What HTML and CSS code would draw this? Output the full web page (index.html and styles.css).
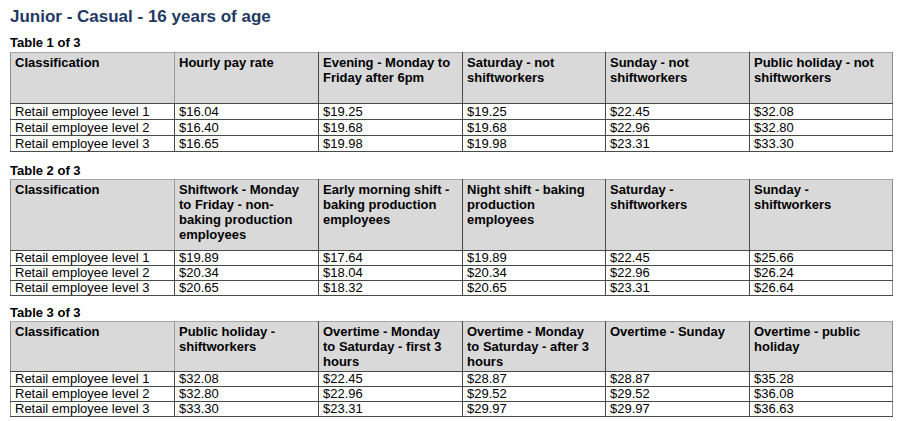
FILE: index.html
```html
<!DOCTYPE html>
<html lang="en">
<head>
<meta charset="utf-8">
<title>Junior - Casual - 16 years of age</title>
<link rel="stylesheet" href="styles.css">
</head>
<body>
<div class="page">
  <h1 class="title">Junior - Casual - 16 years of age</h1>

  <div class="label label-1">Table 1 of 3</div>
  <table class="rates rates-1">
    <colgroup>
      <col class="c1"><col class="c2"><col class="c3"><col class="c4"><col class="c5"><col class="c6">
    </colgroup>
    <thead>
      <tr>
        <th><div class="hd">Classification</div></th>
        <th><div class="hd">Hourly pay rate</div></th>
        <th><div class="hd">Evening - Monday to Friday after 6pm</div></th>
        <th><div class="hd">Saturday - not shiftworkers</div></th>
        <th><div class="hd">Sunday - not shiftworkers</div></th>
        <th><div class="hd">Public holiday - not shiftworkers</div></th>
      </tr>
    </thead>
    <tbody>
      <tr><td>Retail employee level 1</td><td>$16.04</td><td>$19.25</td><td>$19.25</td><td>$22.45</td><td>$32.08</td></tr>
      <tr><td>Retail employee level 2</td><td>$16.40</td><td>$19.68</td><td>$19.68</td><td>$22.96</td><td>$32.80</td></tr>
      <tr><td>Retail employee level 3</td><td>$16.65</td><td>$19.98</td><td>$19.98</td><td>$23.31</td><td>$33.30</td></tr>
    </tbody>
  </table>

  <div class="label label-2">Table 2 of 3</div>
  <table class="rates rates-2">
    <colgroup>
      <col class="c1"><col class="c2"><col class="c3"><col class="c4"><col class="c5"><col class="c6">
    </colgroup>
    <thead>
      <tr>
        <th><div class="hd">Classification</div></th>
        <th><div class="hd">Shiftwork - Monday to Friday - non-baking production employees</div></th>
        <th><div class="hd">Early morning shift - baking production employees</div></th>
        <th><div class="hd">Night shift - baking production employees</div></th>
        <th><div class="hd">Saturday - shiftworkers</div></th>
        <th><div class="hd">Sunday - shiftworkers</div></th>
      </tr>
    </thead>
    <tbody>
      <tr><td>Retail employee level 1</td><td>$19.89</td><td>$17.64</td><td>$19.89</td><td>$22.45</td><td>$25.66</td></tr>
      <tr><td>Retail employee level 2</td><td>$20.34</td><td>$18.04</td><td>$20.34</td><td>$22.96</td><td>$26.24</td></tr>
      <tr><td>Retail employee level 3</td><td>$20.65</td><td>$18.32</td><td>$20.65</td><td>$23.31</td><td>$26.64</td></tr>
    </tbody>
  </table>

  <div class="label label-3">Table 3 of 3</div>
  <table class="rates rates-3">
    <colgroup>
      <col class="c1"><col class="c2"><col class="c3"><col class="c4"><col class="c5"><col class="c6">
    </colgroup>
    <thead>
      <tr>
        <th><div class="hd">Classification</div></th>
        <th><div class="hd">Public holiday - shiftworkers</div></th>
        <th><div class="hd">Overtime - Monday to Saturday - first 3 hours</div></th>
        <th><div class="hd">Overtime - Monday to Saturday - after 3 hours</div></th>
        <th><div class="hd">Overtime - Sunday</div></th>
        <th><div class="hd">Overtime - public holiday</div></th>
      </tr>
    </thead>
    <tbody>
      <tr><td>Retail employee level 1</td><td>$32.08</td><td>$22.45</td><td>$28.87</td><td>$28.87</td><td>$35.28</td></tr>
      <tr><td>Retail employee level 2</td><td>$32.80</td><td>$22.96</td><td>$29.52</td><td>$29.52</td><td>$36.08</td></tr>
      <tr><td>Retail employee level 3</td><td>$33.30</td><td>$23.31</td><td>$29.97</td><td>$29.97</td><td>$36.63</td></tr>
    </tbody>
  </table>
</div>
</body>
</html>
```

FILE: styles.css
```css
html, body {
  margin: 0;
  padding: 0;
  background: #ffffff;
}

body {
  font-family: "Liberation Sans", Arial, sans-serif;
  color: #000000;
}

.page {
  padding: 7px 0 0 10px;
}

.title {
  margin: 0;
  font-size: 17px;
  line-height: 20px;
  font-weight: bold;
  color: #1f3864;
}

.label {
  font-size: 13px;
  line-height: 15px;
  font-weight: bold;
  margin-bottom: 2px;
}

.label-1 { margin-top: 8px; }
.label-2 { margin-top: 11px; margin-bottom: 1px; }
.label-3 { margin-top: 9px; margin-bottom: 1px; }

.rates {
  border-collapse: collapse;
  table-layout: fixed;
  width: 882px;
  font-size: 13px;
}

.c1 { width: 164px; }
.c2 { width: 144px; }
.c3 { width: 144px; }
.c4 { width: 143px; }
.c5 { width: 144px; }
.c6 { width: 143px; }

.rates th,
.rates td {
  border: 1px solid #4a4a4a;
  padding: 0;
  text-align: left;
  vertical-align: top;
}

.rates th {
  background: #d9d9d9;
  font-weight: bold;
  border-top-color: #a6a6a6;
}

.rates th:first-child,
.rates td:first-child {
  border-left-color: #8c8c8c;
}

.rates th:first-child {
  border-right-color: #9a9a9a;
}

.rates th:last-child,
.rates td:last-child {
  border-right-color: #8c8c8c;
}

.hd {
  padding: 2px 10px 0 4px;
  line-height: 15px;
  overflow: hidden;
}

.rates-1 .hd { height: 48px; }
.rates-2 .hd { height: 68px; }
.rates-3 .hd { height: 47px; }

.rates td {
  padding: 0 10px 0 4px;
  line-height: 15px;
  white-space: nowrap;
}

.rates-2 td,
.rates-3 td {
  line-height: 14px;
}
```
